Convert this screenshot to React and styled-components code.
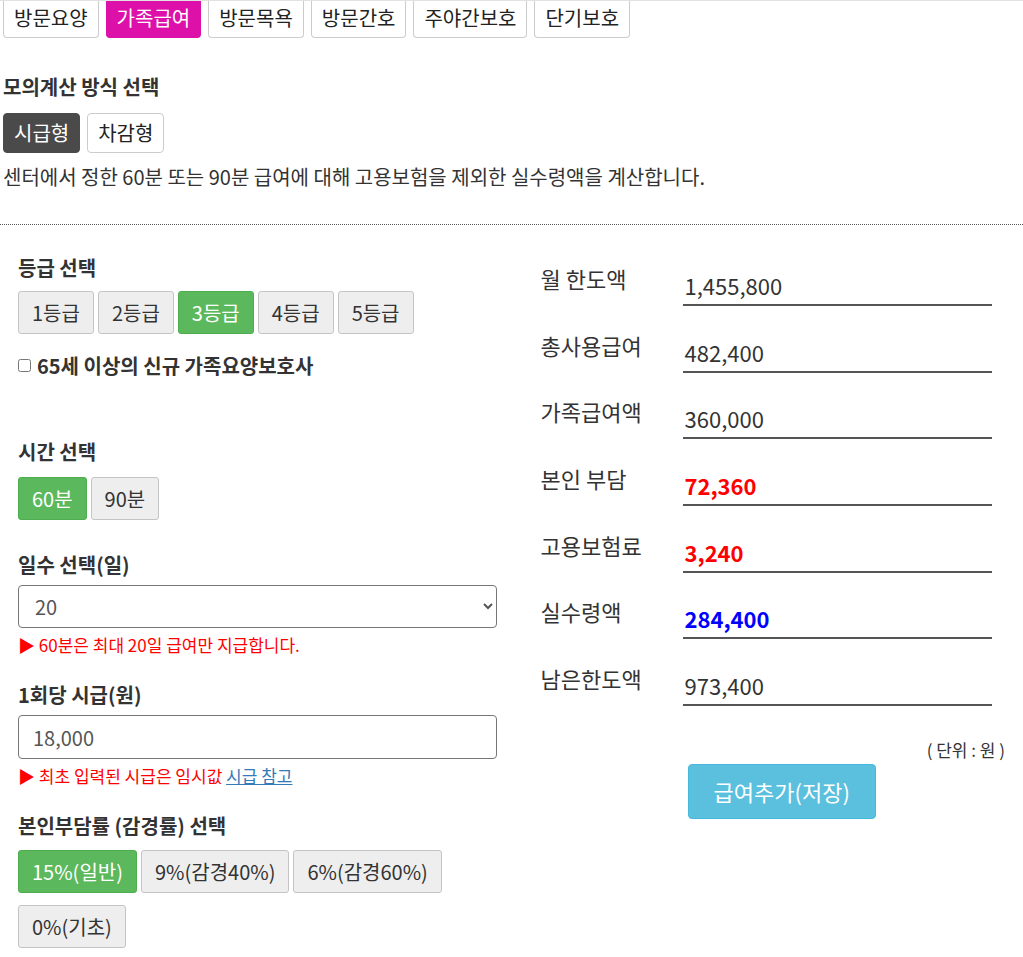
import React from 'react';
import styled, { createGlobalStyle } from 'styled-components';

const GlobalStyle = createGlobalStyle`
  body {
    margin: 0;
    border-top: 1px solid #e2e2e2;
    background: #fff;
    color: #333;
    font-family: "Noto Sans CJK KR", "Noto Sans", sans-serif;
  }
  * { box-sizing: border-box; }
`;

const Top = styled.div`
  padding: 0 3px;
`;

const TabBar = styled.div`
  display: flex;
  gap: 7px;
`;

const Tab = styled.button`
  font-family: inherit;
  font-size: 20px;
  line-height: 26px;
  padding: 4px 10px 6px;
  border: 1px solid #ccc;
  border-top: none;
  border-radius: 0 0 4px 4px;
  background: ${p => (p.active ? '#dd10a9' : '#fff')};
  border-color: ${p => (p.active ? '#dd10a9' : '#ccc')};
  color: ${p => (p.active ? '#fff' : '#222')};
`;

const Heading = styled.div`
  font-size: 20px;
  font-weight: bold;
  line-height: 25px;
  color: #333;
  margin-top: ${p => p.top || 0}px;
`;

const ModeGroup = styled.div`
  display: flex;
  gap: 7px;
  margin-top: 14px;
`;

const ModeButton = styled.button`
  font-family: inherit;
  font-size: 20px;
  line-height: 26px;
  padding: 6px 10px;
  border-radius: 4px;
  border: 1px solid ${p => (p.active ? '#4a4a4a' : '#ccc')};
  background: ${p => (p.active ? '#4a4a4a' : '#fff')};
  color: ${p => (p.active ? '#fff' : '#222')};
`;

const Description = styled.p`
  margin: 11px 0 0;
  font-size: 20px;
  line-height: 26px;
  color: #333;
`;

const Divider = styled.hr`
  margin: 34px 0 0;
  border: none;
  border-top: 1px dotted #555;
`;

const Columns = styled.div`
  display: flex;
  padding: 0 3px;
`;

const Column = styled.div`
  width: 50%;
  padding: ${p => p.pt || 0}px 15px 0;
`;

const Label = styled.div`
  font-size: 20px;
  font-weight: bold;
  line-height: 25px;
  color: #333;
  margin-top: ${p => p.top || 0}px;
`;

const ButtonGroup = styled.div`
  display: flex;
  flex-wrap: wrap;
  column-gap: 4px;
  row-gap: 12px;
  margin-top: ${p => p.top || 12}px;
`;

const OptionButton = styled.button`
  font-family: inherit;
  font-size: 20px;
  line-height: 25px;
  padding: 8px 13px;
  border-radius: 3px;
  border: 1px solid ${p => (p.active ? '#4cae4c' : '#c4c4c4')};
  background: ${p => (p.active ? '#5cb85c' : '#eee')};
  color: ${p => (p.active ? '#fff' : '#333')};
`;

const CheckRow = styled.label`
  display: flex;
  align-items: center;
  gap: 6px;
  margin-top: 19px;
  font-size: 20px;
  font-weight: bold;
  line-height: 25px;
  color: #333;

  input {
    margin: 0;
    width: 13px;
    height: 13px;
  }
`;

const Select = styled.select`
  display: block;
  width: 100%;
  height: 43px;
  margin-top: 8px;
  padding: 0 12px;
  font-family: inherit;
  font-size: 20px;
  color: #555;
  border: 1px solid #767676;
  border-radius: 4px;
  background: #fff;
`;

const TextInput = styled.input`
  display: block;
  width: 100%;
  height: 44px;
  margin-top: 8px;
  padding: 0 14px;
  font-family: inherit;
  font-size: 20px;
  color: #555;
  border: 1px solid #767676;
  border-radius: 4px;
`;

const Note = styled.div`
  margin-top: 6px;
  font-size: 17px;
  line-height: 22px;
  color: #f00;

  a {
    color: #337ab7;
    text-decoration: underline;
  }
`;

const ResultList = styled.div`
  display: flex;
  flex-direction: column;
  gap: 26.7px;
`;

const ResultRow = styled.div`
  display: flex;
  align-items: flex-start;
  padding-right: 13px;
`;

const ResultLabel = styled.div`
  width: 156px;
  padding-left: 14px;
  font-size: 22px;
  line-height: 24px;
  color: #333;
`;

const ResultValue = styled.div`
  flex: 1;
  height: 40px;
  display: flex;
  align-items: center;
  padding: 0 2px;
  border-bottom: 2px solid #555;
  font-size: 22px;
  font-weight: ${p => (p.color ? 'bold' : 'normal')};
  color: ${p => p.color || '#333'};
`;

const Unit = styled.div`
  margin-top: 33px;
  text-align: right;
  font-size: 17px;
  line-height: 22px;
  color: #333;
`;

const SaveButton = styled.button`
  margin: 3px 0 0 161px;
  font-family: inherit;
  font-size: 22px;
  line-height: 29px;
  padding: 12px 25px;
  border-radius: 4px;
  border: 1px solid #46b8da;
  background: #5bc0de;
  color: #fff;
`;

const tabs = ['방문요양', '가족급여', '방문목욕', '방문간호', '주야간보호', '단기보호'];
const grades = ['1등급', '2등급', '3등급', '4등급', '5등급'];
const rates = ['15%(일반)', '9%(감경40%)', '6%(감경60%)', '0%(기초)'];

const results = [
  { label: '월 한도액', value: '1,455,800' },
  { label: '총사용급여', value: '482,400' },
  { label: '가족급여액', value: '360,000' },
  { label: '본인 부담', value: '72,360', color: '#f00' },
  { label: '고용보험료', value: '3,240', color: '#f00' },
  { label: '실수령액', value: '284,400', color: '#00f' },
  { label: '남은한도액', value: '973,400' },
];

export default function App() {
  return (
    <>
      <GlobalStyle />
      <Top>
        <TabBar>
          {tabs.map(t => (
            <Tab key={t} active={t === '가족급여'}>{t}</Tab>
          ))}
        </TabBar>
        <Heading top={36}>모의계산 방식 선택</Heading>
        <ModeGroup>
          <ModeButton active>시급형</ModeButton>
          <ModeButton>차감형</ModeButton>
        </ModeGroup>
        <Description>
          센터에서 정한 60분 또는 90분 급여에 대해 고용보험을 제외한 실수령액을 계산합니다.
        </Description>
      </Top>
      <Divider />
      <Columns>
        <Column pt={30}>
          <Label>등급 선택</Label>
          <ButtonGroup top={11}>
            {grades.map(g => (
              <OptionButton key={g} active={g === '3등급'}>{g}</OptionButton>
            ))}
          </ButtonGroup>
          <CheckRow>
            <input type="checkbox" />
            65세 이상의 신규 가족요양보호사
          </CheckRow>

          <Label top={61}>시간 선택</Label>
          <ButtonGroup top={13}>
            <OptionButton active>60분</OptionButton>
            <OptionButton>90분</OptionButton>
          </ButtonGroup>

          <Label top={32}>일수 선택(일)</Label>
          <Select defaultValue="20">
            {Array.from({ length: 20 }, (_, i) => i + 1).map(n => (
              <option key={n} value={n}>{n}</option>
            ))}
          </Select>
          <Note>▶ 60분은 최대 20일 급여만 지급합니다.</Note>

          <Label top={26}>1회당 시급(원)</Label>
          <TextInput defaultValue="18,000" />
          <Note>
            ▶ 최초 입력된 시급은 임시값 <a href="#">시급 참고</a>
          </Note>

          <Label top={26}>본인부담률 (감경률) 선택</Label>
          <ButtonGroup top={12}>
            {rates.map(r => (
              <OptionButton key={r} active={r === '15%(일반)'}>{r}</OptionButton>
            ))}
          </ButtonGroup>
        </Column>

        <Column pt={41}>
          <ResultList>
            {results.map(r => (
              <ResultRow key={r.label}>
                <ResultLabel>{r.label}</ResultLabel>
                <ResultValue color={r.color}>{r.value}</ResultValue>
              </ResultRow>
            ))}
          </ResultList>
          <Unit>( 단위 : 원 )</Unit>
          <SaveButton>급여추가(저장)</SaveButton>
        </Column>
      </Columns>
    </>
  );
}
